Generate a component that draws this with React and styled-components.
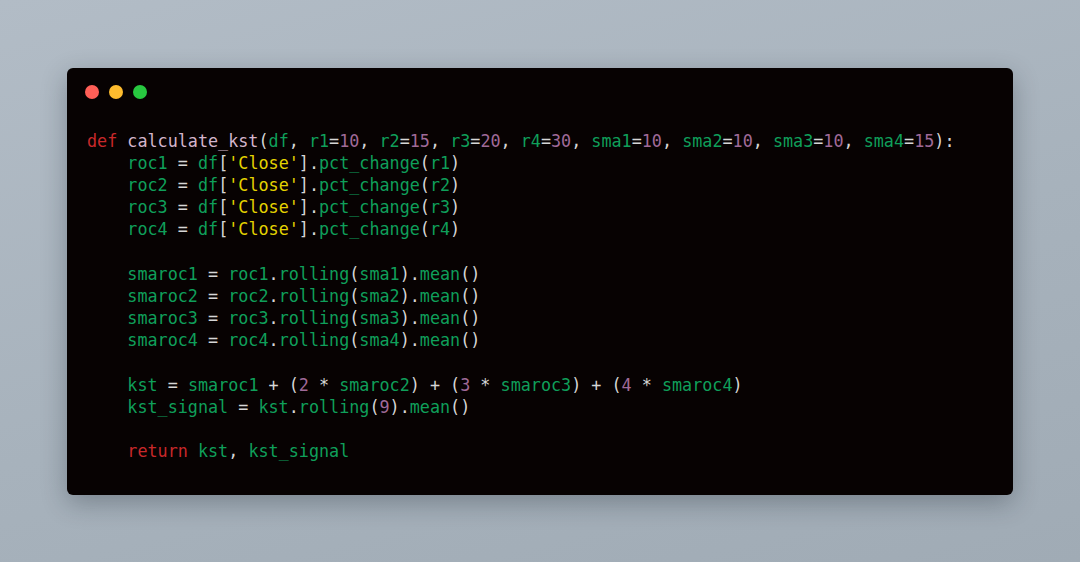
import React from "react";
import styled, { createGlobalStyle } from "styled-components";

const GlobalStyle = createGlobalStyle`
  html, body {
    margin: 0;
    padding: 0;
  }
  body {
    font-family: "DejaVu Sans", sans-serif;
  }
`;

const Page = styled.div`
  width: 1080px;
  height: 562px;
  display: flex;
  align-items: center;
  justify-content: center;
  background: linear-gradient(165deg, #b2bcc6 0%, #a7b2bc 55%, #a0abb5 100%);
`;

const Window = styled.div`
  width: 946px;
  height: 427px;
  box-sizing: border-box;
  background: #070202;
  border-radius: 6px;
  box-shadow: 0 8px 26px rgba(20, 30, 40, 0.3);
  padding: 17px 20px 0 18px;
  display: flex;
  flex-direction: column;
`;

const TitleBar = styled.div`
  display: flex;
  gap: 10px;
`;

const Dot = styled.span`
  width: 14px;
  height: 14px;
  border-radius: 50%;
  background: ${(p) => p.color};
`;

const Code = styled.pre`
  margin: 31px 0 0 2px;
  font-family: "DejaVu Sans Mono", monospace;
  font-size: 16.75px;
  line-height: 22.2px;
  color: #d6d6d6;
  white-space: pre;
`;

const colors = {
  kw: "#c8282a",
  fn: "#d4b5cc",
  id: "#0f9f5a",
  num: "#a06a98",
  str: "#e4d300",
  p: "#d6d6d6",
};

const Tok = styled.span`
  color: ${(p) => colors[p.kind]};
`;

// each line: list of [kind, text]
const lines = [
  [["kw", "def"], ["p", " "], ["fn", "calculate_kst"], ["p", "("], ["id", "df"], ["p", ", "],
    ["id", "r1"], ["p", "="], ["num", "10"], ["p", ", "],
    ["id", "r2"], ["p", "="], ["num", "15"], ["p", ", "],
    ["id", "r3"], ["p", "="], ["num", "20"], ["p", ", "],
    ["id", "r4"], ["p", "="], ["num", "30"], ["p", ", "],
    ["id", "sma1"], ["p", "="], ["num", "10"], ["p", ", "],
    ["id", "sma2"], ["p", "="], ["num", "10"], ["p", ", "],
    ["id", "sma3"], ["p", "="], ["num", "10"], ["p", ", "],
    ["id", "sma4"], ["p", "="], ["num", "15"], ["p", "):"]],
  ...[1, 2, 3, 4].map((n) => [
    ["p", "    "], ["id", `roc${n}`], ["p", " = "], ["id", "df"], ["p", "["], ["str", "'Close'"],
    ["p", "]."], ["id", "pct_change"], ["p", "("], ["id", `r${n}`], ["p", ")"],
  ]),
  [],
  ...[1, 2, 3, 4].map((n) => [
    ["p", "    "], ["id", `smaroc${n}`], ["p", " = "], ["id", `roc${n}`], ["p", "."],
    ["id", "rolling"], ["p", "("], ["id", `sma${n}`], ["p", ")."], ["id", "mean"], ["p", "()"],
  ]),
  [],
  [["p", "    "], ["id", "kst"], ["p", " = "], ["id", "smaroc1"], ["p", " + ("], ["num", "2"],
    ["p", " * "], ["id", "smaroc2"], ["p", ") + ("], ["num", "3"], ["p", " * "], ["id", "smaroc3"],
    ["p", ") + ("], ["num", "4"], ["p", " * "], ["id", "smaroc4"], ["p", ")"]],
  [["p", "    "], ["id", "kst_signal"], ["p", " = "], ["id", "kst"], ["p", "."], ["id", "rolling"],
    ["p", "("], ["num", "9"], ["p", ")."], ["id", "mean"], ["p", "()"]],
  [],
  [["p", "    "], ["kw", "return"], ["p", " "], ["id", "kst"], ["p", ", "], ["id", "kst_signal"]],
];

export default function App() {
  return (
    <>
      <GlobalStyle />
      <Page>
        <Window>
          <TitleBar>
            <Dot color="#ff5f57" />
            <Dot color="#febc2e" />
            <Dot color="#28c840" />
          </TitleBar>
          <Code>
            {lines.map((line, i) => (
              <div key={i}>
                {line.length === 0
                  ? "\u00a0"
                  : line.map(([kind, text], j) => (
                      <Tok key={j} kind={kind}>{text}</Tok>
                    ))}
              </div>
            ))}
          </Code>
        </Window>
      </Page>
    </>
  );
}
